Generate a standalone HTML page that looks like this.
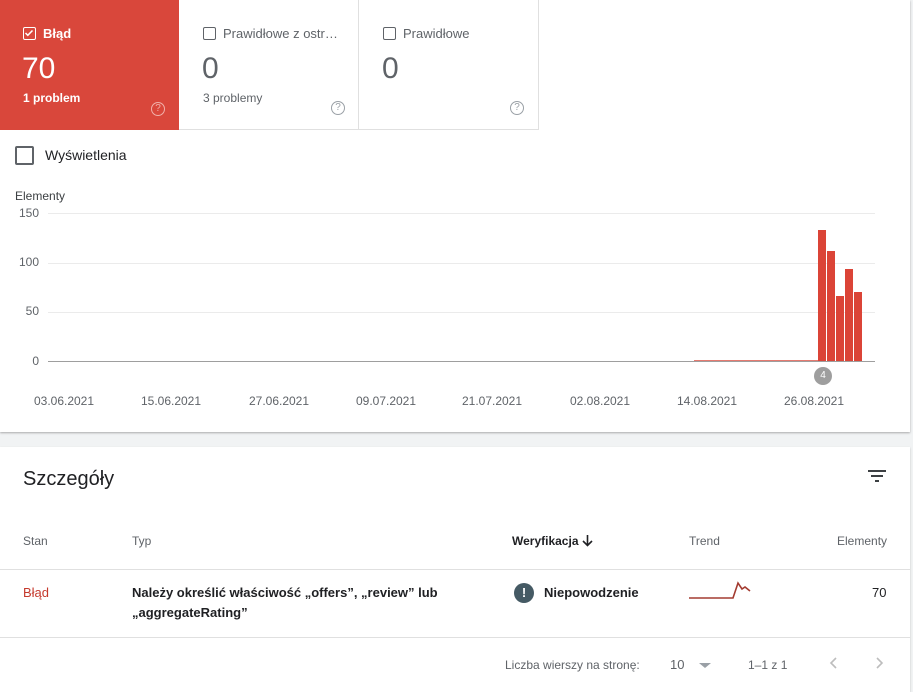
<!DOCTYPE html>
<html><head><meta charset="utf-8"><style>
*{margin:0;padding:0;box-sizing:border-box}
body{width:913px;height:692px;background:#f1f3f4;font-family:"Liberation Sans",Arial,sans-serif;position:relative;overflow:hidden;color:#202124}
.card1{position:absolute;left:0;top:0;width:910px;height:432px;background:#fff;box-shadow:0 1px 2px rgba(0,0,0,.3)}
.card2{position:absolute;left:0;top:447px;width:910px;height:245px;background:#fff;box-shadow:0 1px 2px rgba(0,0,0,.2)}
.a{position:absolute;white-space:nowrap}
.tile{position:absolute;top:0;height:130px;width:180px}
.cb{position:absolute;width:13px;height:13px;border:1.5px solid #5f6368;border-radius:2px}
.q{position:absolute;width:14px;height:14px;border:1.2px solid #9aa0a6;border-radius:50%;font-size:10px;text-align:center;line-height:12px;color:#9aa0a6}
.yl{position:absolute;right:871px;font-size:12px;color:#5f6368}
.grid{position:absolute;left:48px;width:827px;height:1px;background:#ebebeb}
.dl{position:absolute;top:394px;font-size:12px;color:#5f6368;transform:translateX(-50%)}
.bar{position:absolute;background:#db4437;bottom:71px}
.th{position:absolute;top:534px;font-size:12px;color:#5f6368}
</style></head><body>
<div class="card1">
 <div class="tile" style="left:0;width:179px;background:#d9473b;color:#fff">
  <div class="cb" style="left:23px;top:27px;border-color:#fff"><svg width="10" height="10" viewBox="0 0 10 10" style="position:absolute;left:0;top:0"><path d="M1.5 5l2.3 2.3L8.5 2.5" stroke="#fff" stroke-width="1.5" fill="none"/></svg></div>
  <div class="a" style="left:43px;top:26px;font-size:13px;font-weight:bold">Błąd</div>
  <div class="a" style="left:22px;top:52px;font-size:30px">70</div>
  <div class="a" style="left:23px;top:91px;font-size:12px;font-weight:bold">1 problem</div>
  <div class="q" style="left:151px;top:102px;border-color:#f1b1aa;color:#f1b1aa">?</div>
 </div>
 <div class="tile" style="left:179px;border-right:1px solid #e0e0e0;border-bottom:1px solid #e0e0e0">
  <div class="cb" style="left:24px;top:27px"></div>
  <div class="a" style="left:44px;top:26px;font-size:13px;color:#5f6368">Prawidłowe z ostr…</div>
  <div class="a" style="left:23px;top:52px;font-size:30px;color:#5f6368">0</div>
  <div class="a" style="left:24px;top:91px;font-size:12px;color:#5f6368">3 problemy</div>
  <div class="q" style="left:152px;top:101px">?</div>
 </div>
 <div class="tile" style="left:359px;width:180px;border-right:1px solid #e0e0e0;border-bottom:1px solid #e0e0e0">
  <div class="cb" style="left:24px;top:27px"></div>
  <div class="a" style="left:44px;top:26px;font-size:13px;color:#5f6368">Prawidłowe</div>
  <div class="a" style="left:23px;top:52px;font-size:30px;color:#5f6368">0</div>
  <div class="q" style="left:151px;top:101px">?</div>
 </div>
 <div class="a" style="left:15px;top:146px;width:19px;height:19px;border:2px solid #5f6368;border-radius:2px"></div>
 <div class="a" style="left:45px;top:147px;font-size:14px;color:#202124">Wyświetlenia</div>
 <div class="a" style="left:15px;top:189px;font-size:12px;color:#3c4043">Elementy</div>
 <div class="yl" style="top:206px">150</div><div class="grid" style="top:213px"></div>
 <div class="yl" style="top:255px">100</div><div class="grid" style="top:263px"></div>
 <div class="yl" style="top:304px">50</div><div class="grid" style="top:312px"></div>
 <div class="yl" style="top:354px">0</div><div class="grid" style="top:361px;background:#9e9e9e"></div>
 <div class="bar" style="left:694px;width:124px;height:1px;background:#e57a70"></div>
 <div class="bar" style="left:818px;width:8px;height:131px"></div>
 <div class="bar" style="left:827px;width:8px;height:110px"></div>
 <div class="bar" style="left:836px;width:8px;height:65px"></div>
 <div class="bar" style="left:845px;width:8px;height:92px"></div>
 <div class="bar" style="left:854px;width:8px;height:69px"></div>
 <div class="a" style="left:814px;top:367px;width:18px;height:18px;border-radius:50%;background:#9e9e9e;color:#fff;font-size:10px;text-align:center;line-height:18px">4</div>
 <div class="dl" style="left:64px">03.06.2021</div>
 <div class="dl" style="left:171px">15.06.2021</div>
 <div class="dl" style="left:279px">27.06.2021</div>
 <div class="dl" style="left:386px">09.07.2021</div>
 <div class="dl" style="left:492px">21.07.2021</div>
 <div class="dl" style="left:600px">02.08.2021</div>
 <div class="dl" style="left:707px">14.08.2021</div>
 <div class="dl" style="left:814px">26.08.2021</div>
</div>
<div class="card2"></div>
<div class="a" style="left:23px;top:468px;font-size:20px;color:#202124">Szczegóły</div>
<svg class="a" style="left:867px;top:469px" width="20" height="14"><path d="M1 2h18M4 7h12M8 12h4" stroke="#3c4043" stroke-width="2"/></svg>
<div class="th" style="left:23px">Stan</div>
<div class="th" style="left:132px">Typ</div>
<div class="th" style="left:512px;color:#202124;font-weight:bold">Weryfikacja</div>
<svg class="a" style="left:581px;top:534px" width="13" height="13"><path d="M6.5 1v10M2 7l4.5 4.5L11 7" stroke="#202124" stroke-width="1.6" fill="none"/></svg>
<div class="th" style="left:689px">Trend</div>
<div class="th" style="left:837px">Elementy</div>
<div class="a" style="left:0;top:569px;width:910px;height:1px;background:#e0e0e0"></div>
<div class="a" style="left:23px;top:585px;font-size:13px;color:#c5392c">Błąd</div>
<div class="a" style="left:132px;top:583px;font-size:13px;line-height:20px;font-weight:bold;color:#202124">Należy określić właściwość „offers”, „review” lub<br>„aggregateRating”</div>
<div class="a" style="left:514px;top:583px;width:20px;height:20px;border-radius:50%;background:#455a64;color:#fff;font-weight:bold;font-size:13px;text-align:center;line-height:20px">!</div>
<div class="a" style="left:544px;top:585px;font-size:13px;font-weight:bold;color:#202124">Niepowodzenie</div>
<svg class="a" style="left:688px;top:580px" width="70" height="22"><path d="M1 18H45L50 3L54 9L57 7L62 11" stroke="#a33b30" stroke-width="1.6" fill="none"/></svg>
<div class="a" style="left:872px;top:585px;font-size:13px;color:#202124">70</div>
<div class="a" style="left:0;top:637px;width:910px;height:1px;background:#e0e0e0"></div>
<div class="a" style="left:505px;top:658px;font-size:12px;color:#5f6368">Liczba wierszy na stronę:</div>
<div class="a" style="left:670px;top:657px;font-size:13px;color:#5f6368">10</div>
<div class="a" style="left:699px;top:663px;width:0;height:0;border-left:6px solid transparent;border-right:6px solid transparent;border-top:5px solid #9aa0a6"></div>
<div class="a" style="left:748px;top:658px;font-size:12px;color:#5f6368">1–1 z 1</div>
<svg class="a" style="left:829px;top:656px" width="10" height="14"><path d="M7 2L2 7l5 5" stroke="#bdbdbd" stroke-width="1.6" fill="none"/></svg>
<svg class="a" style="left:874px;top:656px" width="10" height="14"><path d="M3 2l5 5-5 5" stroke="#bdbdbd" stroke-width="1.6" fill="none"/></svg>
</body></html>
